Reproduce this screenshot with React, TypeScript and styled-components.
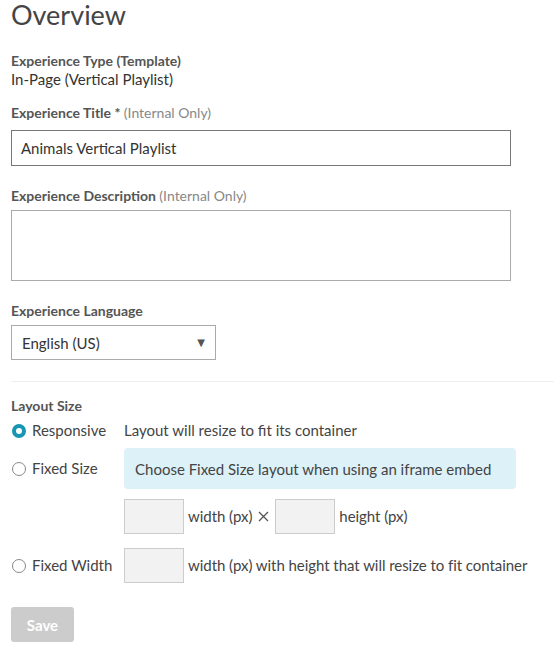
import styled, { createGlobalStyle } from "styled-components";

const GlobalStyle = createGlobalStyle`
    body {
        margin: 0;
        background: #fff;
        font-family: Lato, "Open Sans", sans-serif;
        color: #333;
    }
`;

const Page = styled.div`
    padding: 0 0 12px 11px;
    width: 543px;
`;

const Title = styled.h1`
    margin: 0;
    font-size: 27px;
    line-height: 30px;
    font-weight: 400;
    color: #444;
`;

const Field = styled.div<{ $top: number }>`
    margin-top: ${props => props.$top}px;
`;

const Label = styled.div<{ $gap?: number }>`
    font-size: 14px;
    line-height: 19px;
    font-weight: 700;
    color: #555;
    margin-bottom: ${props => props.$gap ?? 0}px;
`;

const Hint = styled.span`
    font-size: 14px;
    font-weight: 400;
    color: #888;
`;

const Value = styled.div`
    font-size: 15px;
    line-height: 19px;
    color: #333;
`;

const TextInput = styled.div`
    box-sizing: border-box;
    width: 500px;
    height: 36px;
    border: 1px solid #777;
    padding: 0 9px;
    display: flex;
    align-items: center;
    font-size: 15px;
    color: #333;
`;

const TextArea = styled.div`
    box-sizing: border-box;
    width: 500px;
    height: 71px;
    border: 1px solid #aaa;
`;

const Select = styled.div`
    box-sizing: border-box;
    width: 205px;
    height: 35px;
    border: 1px solid #aaa;
    padding: 0 10px 0 10px;
    display: flex;
    align-items: center;
    justify-content: space-between;
    font-size: 15px;
    color: #333;
`;

const Arrow = styled.span`
    font-family: "DejaVu Sans", sans-serif;
    font-size: 10px;
    color: #555;
`;

const Divider = styled.hr`
    margin: 21px 0 0;
    border: none;
    border-top: 1px solid #eee;
`;

const Options = styled.div`
    display: flex;
    flex-direction: column;
`;

const OptionRow = styled.div<{ $top: number }>`
    display: flex;
    align-items: center;
    margin-top: ${props => props.$top}px;
`;

const RadioLabel = styled.label`
    width: 113px;
    display: flex;
    align-items: center;
    font-size: 15px;
    line-height: 19px;
    color: #444;
    flex-shrink: 0;
`;

const Radio = styled.span<{ $checked?: boolean }>`
    box-sizing: border-box;
    width: 14px;
    height: 14px;
    border-radius: 50%;
    margin: 0 6px 0 1px;
    ${props => props.$checked
        ? `border: 4px solid #1597b3; background: #fff;`
        : `border: 1px solid #888; background: #fff;`}
`;

const Description = styled.span`
    font-size: 15px;
    line-height: 19px;
    color: #444;
`;

const InfoBox = styled.div`
    box-sizing: border-box;
    width: 392px;
    height: 41px;
    padding: 0 11px;
    display: flex;
    align-items: center;
    background: #dcf1f8;
    border-radius: 4px;
    font-size: 15px;
    color: #444;
`;

const SizeInput = styled.div`
    box-sizing: border-box;
    width: 60px;
    height: 35px;
    background: #f2f2f2;
    border: 1px solid #ccc;
    margin-right: 4px;
    flex-shrink: 0;
`;

const Unit = styled.span<{ $gap?: number }>`
    display: flex;
    align-items: center;
    font-size: 15px;
    line-height: 19px;
    color: #444;
    margin-right: ${props => props.$gap ?? 5}px;
    letter-spacing: -0.05px;
`;

const Times = styled.svg`
    margin-left: 6px;
    color: #555;
`;

const SaveButton = styled.button`
    margin-top: 24px;
    width: 63px;
    height: 35px;
    border: none;
    border-radius: 3px;
    background: #ccc;
    color: #fff;
    font-family: Lato, sans-serif;
    font-size: 15px;
    font-weight: 700;
`;

const App = () => {
    return (
        <Page>
            <GlobalStyle />
            <Title>Overview</Title>

            <Field $top={21}>
                <Label>Experience Type (Template)</Label>
                <Value>In-Page (Vertical Playlist)</Value>
            </Field>

            <Field $top={14}>
                <Label $gap={8}>Experience Title * <Hint>(Internal Only)</Hint></Label>
                <TextInput>Animals Vertical Playlist</TextInput>
            </Field>

            <Field $top={20}>
                <Label $gap={5}>Experience Description <Hint>(Internal Only)</Hint></Label>
                <TextArea />
            </Field>

            <Field $top={20}>
                <Label $gap={5}>Experience Language</Label>
                <Select>
                    <span>English (US)</span>
                    <Arrow>▼</Arrow>
                </Select>
            </Field>

            <Divider />

            <Field $top={14}>
                <Label>Layout Size</Label>
                <Options>
                    <OptionRow $top={6}>
                        <RadioLabel><Radio $checked />Responsive</RadioLabel>
                        <Description>Layout will resize to fit its container</Description>
                    </OptionRow>
                    <OptionRow $top={8}>
                        <RadioLabel><Radio />Fixed Size</RadioLabel>
                        <InfoBox>Choose Fixed Size layout when using an iframe embed</InfoBox>
                    </OptionRow>
                    <OptionRow $top={10}>
                        <RadioLabel />
                        <SizeInput />
                        <Unit $gap={6}>
                            width (px)
                            <Times width="11" height="11" viewBox="0 0 11 11">
                                <path d="M1 1 L10 10 M10 1 L1 10" stroke="currentColor" strokeWidth="1.3" fill="none" />
                            </Times>
                        </Unit>
                        <SizeInput />
                        <Unit>height (px)</Unit>
                    </OptionRow>
                    <OptionRow $top={14}>
                        <RadioLabel><Radio />Fixed Width</RadioLabel>
                        <SizeInput />
                        <Unit>width (px) with height that will resize to fit container</Unit>
                    </OptionRow>
                </Options>
            </Field>

            <SaveButton>Save</SaveButton>
        </Page>
    );
};

export default App;
